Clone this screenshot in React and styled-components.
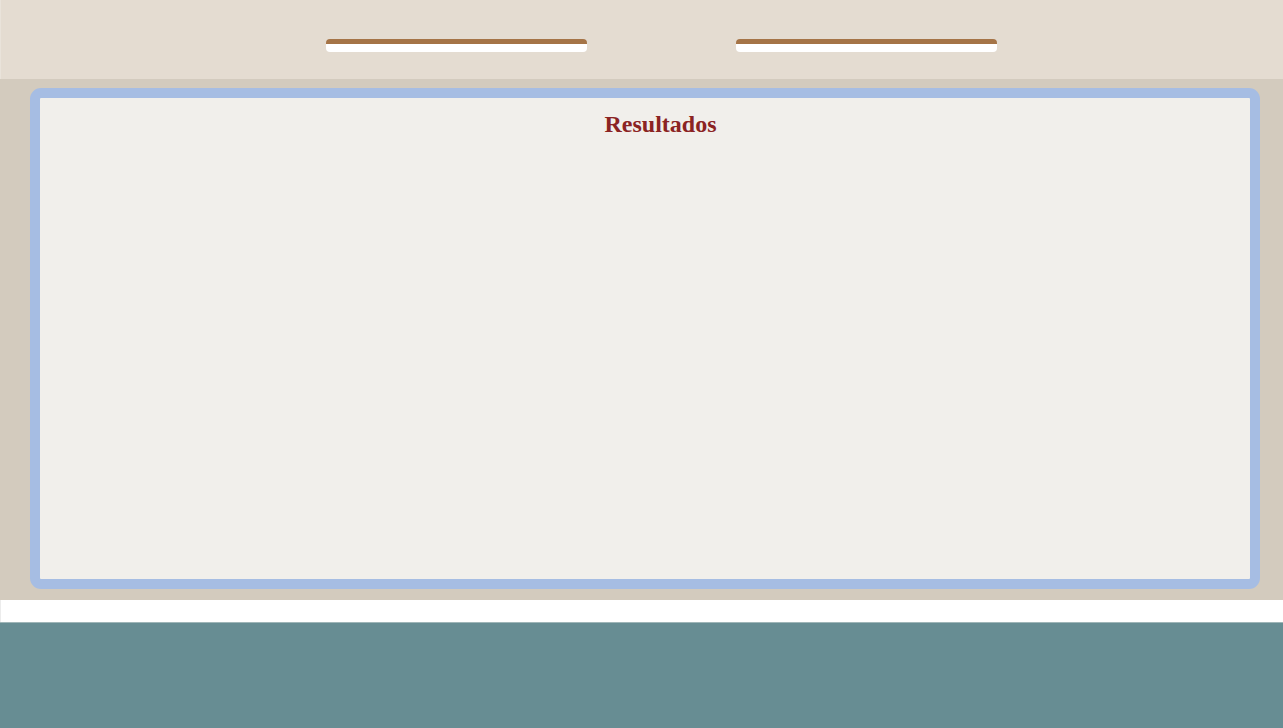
import styled, { createGlobalStyle } from "styled-components"

const GlobalStyle = createGlobalStyle`
    html, body {
        margin: 0;
        padding: 0;
        background: #ffffff;
        font-family: "Liberation Serif", serif;
    }
`

function App() {
    return (
        <>
            <GlobalStyle />
            <Header>
                <Field />
                <Field />
            </Header>
            <Main>
                <ResultsPanel>
                    <PanelTitle>Resultados</PanelTitle>
                </ResultsPanel>
            </Main>
            <Spacer />
            <Footer />
        </>
    )
}

const Header = styled.header`
    display: flex;
    justify-content: center;
    align-items: flex-start;
    gap: 149px;
    height: 79px;
    padding-top: 39px;
    padding-left: 39px;
    box-sizing: border-box;
    background-color: #e4dcd1;
    border-left: 1px solid #e9e3da;
`

const Field = styled.div`
    width: 261px;
    height: 13px;
    box-sizing: border-box;
    background-color: #ffffff;
    border-top: 5px solid #a57447;
    border-radius: 4px;
`

const Main = styled.main`
    display: flex;
    background-color: #d3cbbe;
    padding: 9px 23px 11px 30px;
`

const ResultsPanel = styled.section`
    flex: 1;
    height: 501px;
    box-sizing: border-box;
    border: 10px solid #a6bde3;
    border-radius: 11px;
    background-color: #f1efeb;
    display: flex;
    flex-direction: column;
    align-items: center;
    padding-top: 14px;
    padding-left: 31px;
`

const PanelTitle = styled.h2`
    margin: 0;
    font-family: "Liberation Serif", serif;
    font-size: 24px;
    font-weight: bold;
    color: #8b2323;
    line-height: 1;
`

const Spacer = styled.div`
    height: 22px;
    background-color: #ffffff;
    border-left: 1px solid #ececec;
`

const Footer = styled.footer`
    height: 105px;
    background-color: #678d93;
    border-top: 1px solid #9fb6b8;
`

export default App
